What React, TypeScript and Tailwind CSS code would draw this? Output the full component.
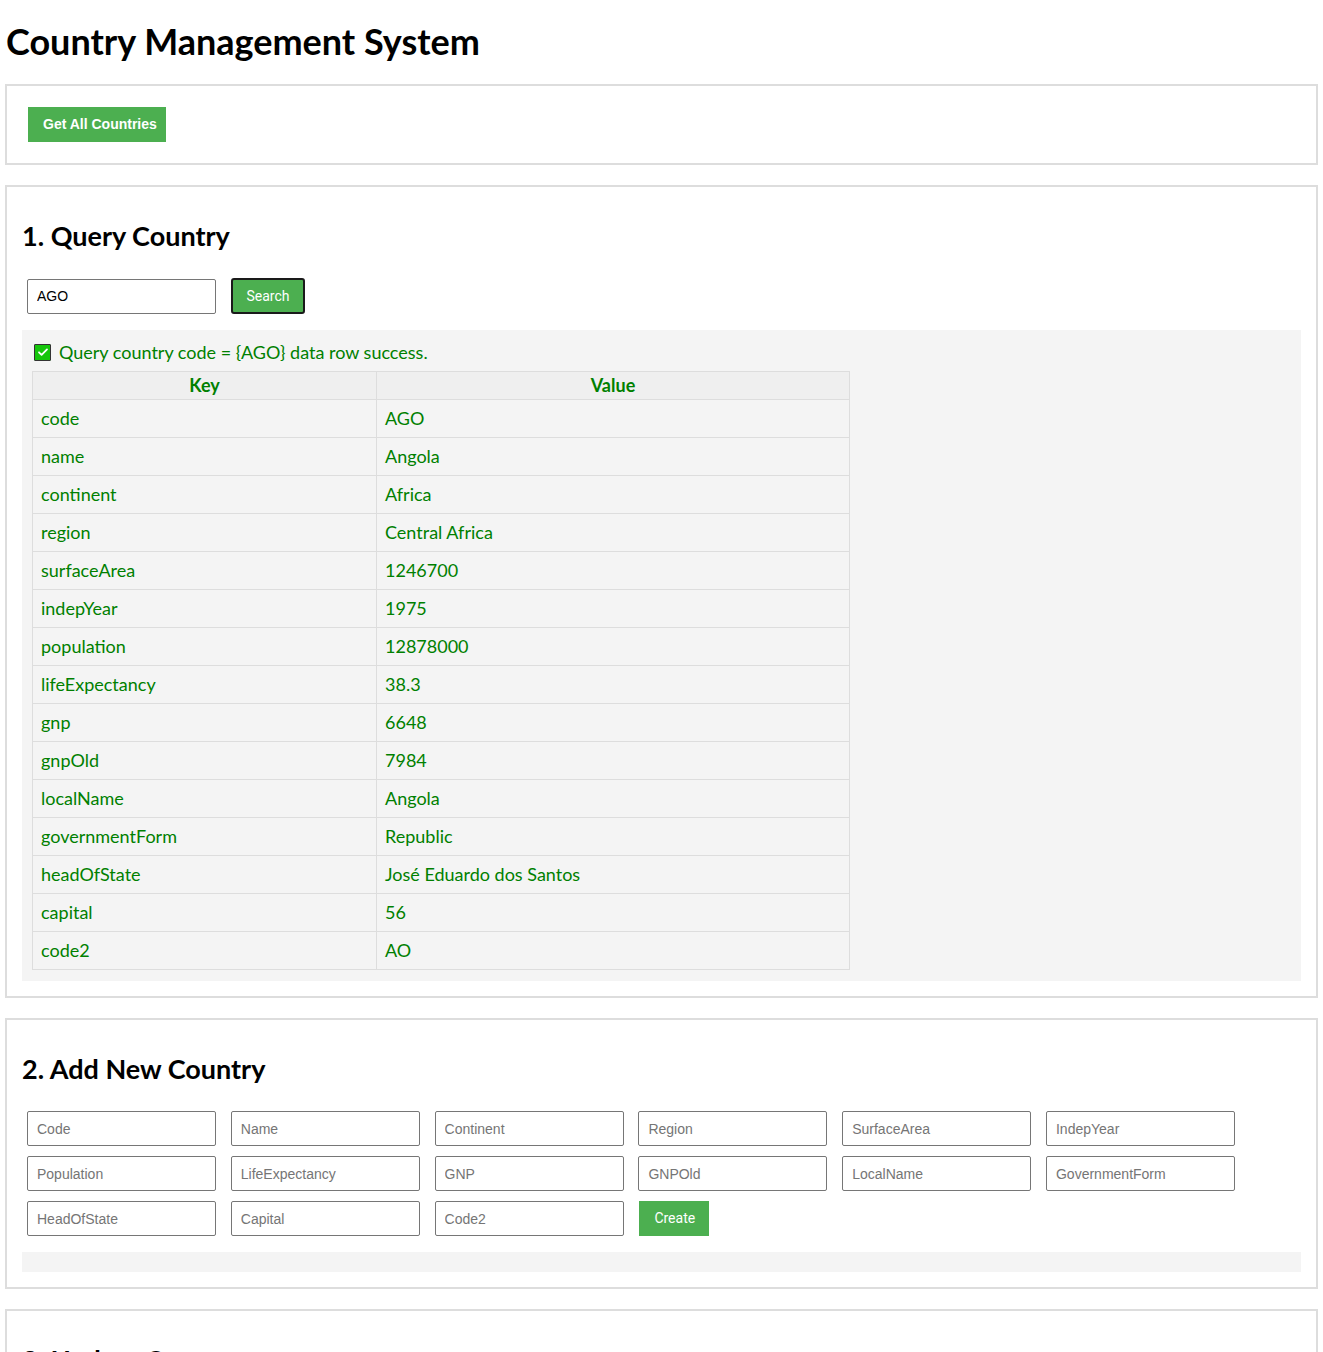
import React from "react";

const country: [string, string][] = [
  ["code", "AGO"],
  ["name", "Angola"],
  ["continent", "Africa"],
  ["region", "Central Africa"],
  ["surfaceArea", "1246700"],
  ["indepYear", "1975"],
  ["population", "12878000"],
  ["lifeExpectancy", "38.3"],
  ["gnp", "6648"],
  ["gnpOld", "7984"],
  ["localName", "Angola"],
  ["governmentForm", "Republic"],
  ["headOfState", "José Eduardo dos Santos"],
  ["capital", "56"],
  ["code2", "AO"],
];

const addFields = [
  "Code",
  "Name",
  "Continent",
  "Region",
  "SurfaceArea",
  "IndepYear",
  "Population",
  "LifeExpectancy",
  "GNP",
  "GNPOld",
  "LocalName",
  "GovernmentForm",
  "HeadOfState",
  "Capital",
  "Code2",
];

const inputCls =
  "w-[189px] h-[35px] border border-[#767676] rounded-[2px] bg-white px-[9px] text-[14px] text-black font-['Liberation_Sans',Arial,sans-serif] placeholder:text-[#757575] outline-none";

const btnCls =
  "h-[35px] bg-[#4CAF50] text-white text-[14px] whitespace-nowrap font-['Liberation_Sans',Arial,sans-serif] px-[15px]";

function Section({ children }: { children: React.ReactNode }) {
  return <section className="border-2 border-[#ddd] p-[15px] mb-[20px]">{children}</section>;
}

function Heading({ children }: { children: React.ReactNode }) {
  return (
    <h2 className="text-[27px] leading-[32px] font-bold mt-[18px] mb-[26px] text-black">{children}</h2>
  );
}

function CheckMark() {
  return (
    <span className="inline-flex items-center justify-center w-[17px] h-[17px] bg-[#16c60c] border border-[#333] rounded-[1px]">
      <svg width="12" height="12" viewBox="0 0 12 12" fill="none">
        <path d="M2 6.3l2.6 2.6L10 3.4" stroke="white" strokeWidth="1.8" strokeLinecap="round" strokeLinejoin="round" />
      </svg>
    </span>
  );
}

export default function App() {
  return (
    <div className="px-[5px] font-['Lato','Noto_Sans',sans-serif] text-[18px] bg-white min-h-screen">
      <h1 className="text-[36px] leading-[44px] font-bold pt-[19px] mb-[21px] pl-[1px] text-black">
        Country Management System
      </h1>

      <Section>
        <div className="flex pl-[6px] pt-[6px] pb-[6px]">
          <button className={`${btnCls} text-[13.5px] font-bold w-[138px] px-0`}>Get All Countries</button>
        </div>
      </Section>

      <Section>
        <Heading>1. Query Country</Heading>
        <div className="flex items-center gap-[15px] pl-[5px] h-[36px]">
          <input className={inputCls} defaultValue="AGO" />
          <button className="h-[36px] w-[74px] bg-[#4CAF50] text-white text-[14px] font-['Roboto',Arial,sans-serif] border-2 border-[#1a1a1a] rounded-[3px]">
            Search
          </button>
        </div>
        <div className="mt-[16px] bg-[#f4f4f4] p-[10px] pb-[11px] text-[#008000]">
          <div className="flex items-center gap-[8px] h-[24px] pl-[2px]">
            <CheckMark />
            <span>Query country code = {"{AGO}"} data row success.</span>
          </div>
          <table className="mt-[7px] border-collapse w-[818px]">
            <thead>
              <tr>
                <th className="w-[344px] h-[28px] bg-[#efefef] border border-[#ddd] font-bold text-center p-0">Key</th>
                <th className="h-[28px] bg-[#efefef] border border-[#ddd] font-bold text-center p-0">Value</th>
              </tr>
            </thead>
            <tbody>
              {country.map(([k, v]) => (
                <tr key={k}>
                  <td className="h-[38px] border border-[#ddd] px-[8px] py-0">{k}</td>
                  <td className="h-[38px] border border-[#ddd] px-[8px] py-0">{v}</td>
                </tr>
              ))}
            </tbody>
          </table>
        </div>
      </Section>

      <Section>
        <Heading>2. Add New Country</Heading>
        <div className="flex flex-wrap gap-x-[14.8px] gap-y-[10px] pl-[5px] w-[1240px]">
          {addFields.map((f) => (
            <input key={f} className={inputCls} placeholder={f} />
          ))}
          <button className={`${btnCls} w-[70px] px-0 ml-[1px] font-['Roboto',Arial,sans-serif]`}>Create</button>
        </div>
        <div className="mt-[16px] bg-[#f4f4f4] h-[20px]" />
      </Section>

      <Section>
        <Heading>3. Update Country</Heading>
        <div className="flex flex-wrap gap-x-[14.8px] gap-y-[10px] pl-[5px] w-[1240px]">
          {addFields.map((f) => (
            <input key={f} className={inputCls} placeholder={f} />
          ))}
          <button className={`${btnCls} w-[70px] px-0 font-['Roboto',Arial,sans-serif]`}>Update</button>
        </div>
        <div className="mt-[16px] bg-[#f4f4f4] h-[20px]" />
      </Section>
    </div>
  );
}
